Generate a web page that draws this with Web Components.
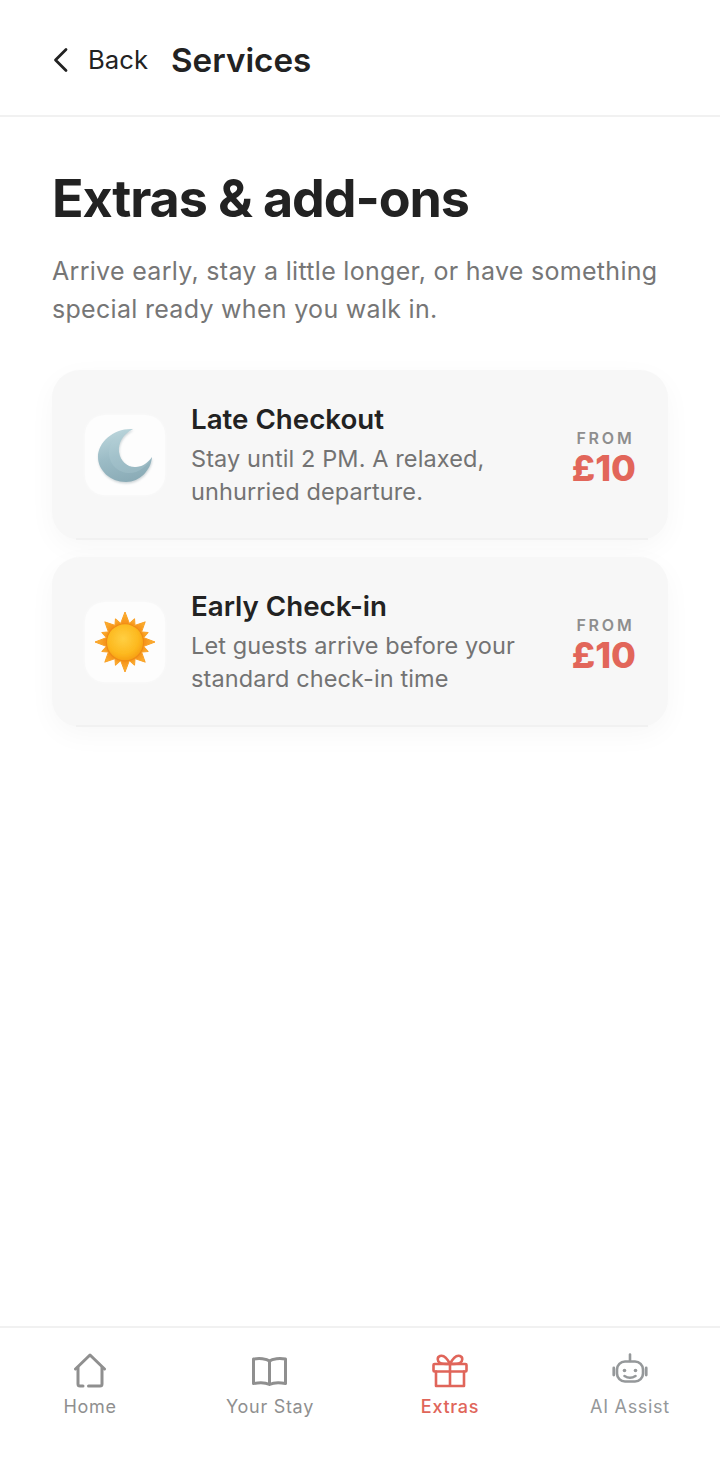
<!DOCTYPE html>
<html lang="en"><head><meta charset="utf-8"><title>Extras</title>
<style>
html,body{margin:0;padding:0;background:#fff}
body{font-family:Inter,"Liberation Sans",sans-serif;color:#222}
</style></head><body>
<app-screen>
  <app-header slot="header" back="Back" title="Services"></app-header>
  <page-intro heading="Extras &amp; add-ons">Arrive early, stay a little longer, or have something<br>special ready when you walk in.</page-intro>
  <extra-card name="Late Checkout" price="£10">
    <svg slot="icon" width="80" height="80" viewBox="0 0 80 80">
      <defs>
        <linearGradient id="m" x1="0.3" y1="0" x2="0.55" y2="1"><stop offset="0" stop-color="#bcd6dc"/><stop offset=".5" stop-color="#9cbcc6"/><stop offset="1" stop-color="#8aabb6"/></linearGradient>
        <filter id="b" x="-20%" y="-20%" width="140%" height="140%"><feGaussianBlur stdDeviation="1"/></filter>
      </defs>
      <path d="M48 14C38 19 33 28 34 37C35 46 43 53 51 52C57 52 63 48 67 42C66 55 55 67 41 67C25 67 13 55 13 42C13 27 29 13 48 14Z" fill="#5d7780" opacity=".3" filter="url(#b)" transform="translate(.5 1.500)"/>
      <path d="M48 14C38 19 33 28 34 37C35 46 43 53 51 52C57 52 63 48 67 42C66 55 55 67 41 67C25 67 13 55 13 42C13 27 29 13 48 14Z" fill="url(#m)"/>
      <path d="M48 14C38 19 33 28 34 37C35 46 43 53 51 52C57 52 63 48 67 42C62 52 52 59 43 58C31 57 23 47 24 36C25 26 35 17 48 14Z" fill="#b4d0d7" opacity=".28"/>
    </svg>
    Stay until 2 PM. A relaxed,<br>unhurried departure.
  </extra-card>
  <extra-card name="Early Check-in" price="£10" second>
    <sun-icon slot="icon"></sun-icon>
    Let guests arrive before your<br>standard check-in time
  </extra-card>
  <tab-bar slot="footer">
    <tab-item label="Home"><svg viewBox="0 0 36 36" fill="none" stroke="currentColor" stroke-width="3" stroke-linecap="round" stroke-linejoin="round"><path d="M3.500 16L18 2L32.500 16"/><path d="M6 14.500V31Q6 33 8 33H11M16.500 33H28Q30 33 30 31V14.500"/></svg></tab-item>
    <tab-item label="Your Stay"><svg viewBox="0 0 36 36" fill="none" stroke="currentColor" stroke-width="3" stroke-linejoin="round"><path d="M17.500 8C14.500 5.500 7 5 1.500 6V30.500C7 29.500 13.500 29.500 17.500 31.500C21.500 29.500 28 29.500 33.500 30.500V6C28 5 20.500 5.500 17.500 8Z"/><path d="M17.500 8V31.500"/></svg></tab-item>
    <tab-item label="Extras" active><svg viewBox="0 0 36 36" fill="none" stroke="currentColor" stroke-width="2.600" stroke-linecap="round" stroke-linejoin="round"><rect x="1.500" y="11" width="33" height="7.500" rx="1"/><path d="M4 18.500V33H32V18.500M18 11V33"/><path d="M18 11C15 5 11 2 8 3C5 4 5 8 8 10C10 11 14 11 18 11C22 11 26 11 28 10C31 8 31 4 28 3C25 2 21 5 18 11Z"/></svg></tab-item>
    <tab-item label="AI Assist" cool><svg viewBox="0 0 36 36" fill="none" stroke="currentColor" stroke-width="2.600" stroke-linecap="round" stroke-linejoin="round"><path d="M18 1.500V8"/><rect x="5" y="8.500" width="26" height="20" rx="8"/><path d="M1.800 15V22M34.200 15V22" stroke-width="2.800"/><path d="M12.500 23Q18 26.500 23.500 23"/><circle cx="12.500" cy="17.500" r="1.800" fill="currentColor" stroke="none"/><circle cx="23.500" cy="17.500" r="1.800" fill="currentColor" stroke="none"/></svg></tab-item>
  </tab-bar>
</app-screen>
<script>
function def(name, css, html){
  customElements.define(name, class extends HTMLElement{
    connectedCallback(){
      if(this.shadowRoot) return;
      const r=this.attachShadow({mode:'open'});
      r.innerHTML='<style>'+css+'</style>'+(typeof html==='function'?html(this):html);
    }
  });
}
const esc=s=>(s||'').replace(/&/g,'&amp;').replace(/</g,'&lt;');
def('app-screen',
 ':host{display:flex;flex-direction:column;height:1458px;width:720px;overflow:hidden;background:#fff}'+
 'main{flex:1;display:flex;flex-direction:column;padding:0 52px;min-height:0}',
 '<slot name="header"></slot><main><slot></slot></main><slot name="footer"></slot>');
def('app-header',
 ':host{display:flex;align-items:center;height:111px;padding:4px 0 0 52px;border-bottom:2px solid #f1f1f1;box-sizing:content-box;color:#222}'+
 'svg{width:18px;height:26px;margin-right:18px;flex:none}'+
 '.b{font-size:25.700px;font-weight:400;margin-right:23px}'+
 '.t{font-size:33.200px;font-weight:600}',
 el=>`<svg viewBox="0 0 18 26" fill="none" stroke="#222" stroke-width="2.800" stroke-linecap="round" stroke-linejoin="round"><path d="M14 2.500L3.500 13L14 23.500"/></svg><span class="b">${esc(el.getAttribute('back'))}</span><span class="t">${esc(el.getAttribute('title'))}</span>`);
def('page-intro',
 ':host{display:block;padding-top:52px;margin-bottom:42px}'+
 'h1{margin:0;font-size:52px;line-height:60px;font-weight:700;letter-spacing:-1.100px;color:#222;white-space:nowrap}'+
 'p{margin:23px 0 0;font-size:25px;line-height:38px;color:#767676;letter-spacing:.3px;white-space:nowrap}',
 el=>`<h1>${esc(el.getAttribute('heading'))}</h1><p><slot></slot></p>`);
def('extra-card',
 ':host{display:flex;align-items:center;height:170px;box-sizing:border-box;padding:0 32px 0 33px;background:#f7f7f7;border-radius:28px;box-shadow:0 8px 28px rgba(0,0,0,.035);position:relative;margin-bottom:17px;color:#666}'+
 '.ic{width:80px;height:80px;flex:none;background:#fdfdfd;border-radius:20px;margin-right:26px;display:flex;box-shadow:0 0 3px #fbfbfb}'+
 '.tx{flex:1;min-width:0}'+
 '.n{font-size:27.700px;line-height:34px;font-weight:600;color:#222;margin-top:-1px}'+
 '.d{font-size:23.500px;line-height:33px;color:#737373;margin-top:6px;letter-spacing:.1px;white-space:nowrap}'+
 '.p{flex:none;display:flex;flex-direction:column;align-items:flex-end;padding-top:6px}'+
 '.f{font-size:16px;line-height:20px;font-weight:600;letter-spacing:2.800px;color:#8e8e8e;margin-right:1.500px}'+
 '.v{font-size:36px;line-height:40px;font-weight:800;color:#e2665a}'+
 '.rule{position:absolute;left:24px;right:20px;bottom:0;height:2px;background:#f1f1f1}',
 el=>`<div class="ic"><slot name="icon"></slot></div><div class="tx"><div class="n">${esc(el.getAttribute('name'))}</div><div class="d"><slot></slot></div></div><div class="p"><div class="f">FROM</div><div class="v">${esc(el.getAttribute('price'))}</div></div><div class="rule"></div>`);
def('sun-icon',':host{display:block;width:80px;height:80px}',()=>{
  let rays='';
  for(let i=0;i<16;i++){
    const a=i*22.5, big=i%2===0, l=big?(i%4===0?30:28.500):25, w=big?(i%4===0?5:5.500):4;
    rays+=`<polygon transform="rotate(${a} 40 40)" points="${40-w},${40-17} 40,${40-l} ${40+w},${40-17}" fill="url(#r)" stroke="#f9a126" stroke-width="1" stroke-linejoin="round"/>`;
  }
  return `<svg width="80" height="80" viewBox="0 0 80 80"><defs><filter id="sf" x="-10%" y="-10%" width="120%" height="120%"><feGaussianBlur stdDeviation=".35"/></filter><linearGradient id="r" x1="0" y1="0" x2="0" y2="1"><stop offset="0" stop-color="#fcb636"/><stop offset="1" stop-color="#f58c14"/></linearGradient><radialGradient id="s" cx=".45" cy=".4" r=".65"><stop offset="0" stop-color="#ffcf42"/><stop offset=".65" stop-color="#fdb91f"/><stop offset="1" stop-color="#f69c12"/></radialGradient></defs><g filter="url(#sf)">${rays}<circle cx="40" cy="40.500" r="19" fill="#ee8a16"/><circle cx="40" cy="40.300" r="18" fill="url(#s)"/></g></svg>`;
});
def('tab-bar',
 ':host{display:grid;grid-template-columns:repeat(4,1fr);height:130px;box-sizing:content-box;border-top:2px solid #f1f1f1;background:#fff}',
 '<slot></slot>');
def('tab-item',
 ':host{display:flex;flex-direction:column;align-items:center;padding-top:25px;color:#8f8f8f}'+
 ':host([active]){color:#e0655a}'+
 ':host([cool]){color:#95989a}'+
 '.i{display:block;width:36px;height:36px}'+
 '::slotted(svg){display:block;width:36px;height:36px}'+
 '.l{font-size:18px;line-height:24px;font-weight:400;letter-spacing:.7px;margin-top:6px}'+
 ':host([active]) .l{font-weight:500}',
 el=>`<div class="i"><slot></slot></div><div class="l">${esc(el.getAttribute('label'))}</div>`);
</script>
</body></html>
